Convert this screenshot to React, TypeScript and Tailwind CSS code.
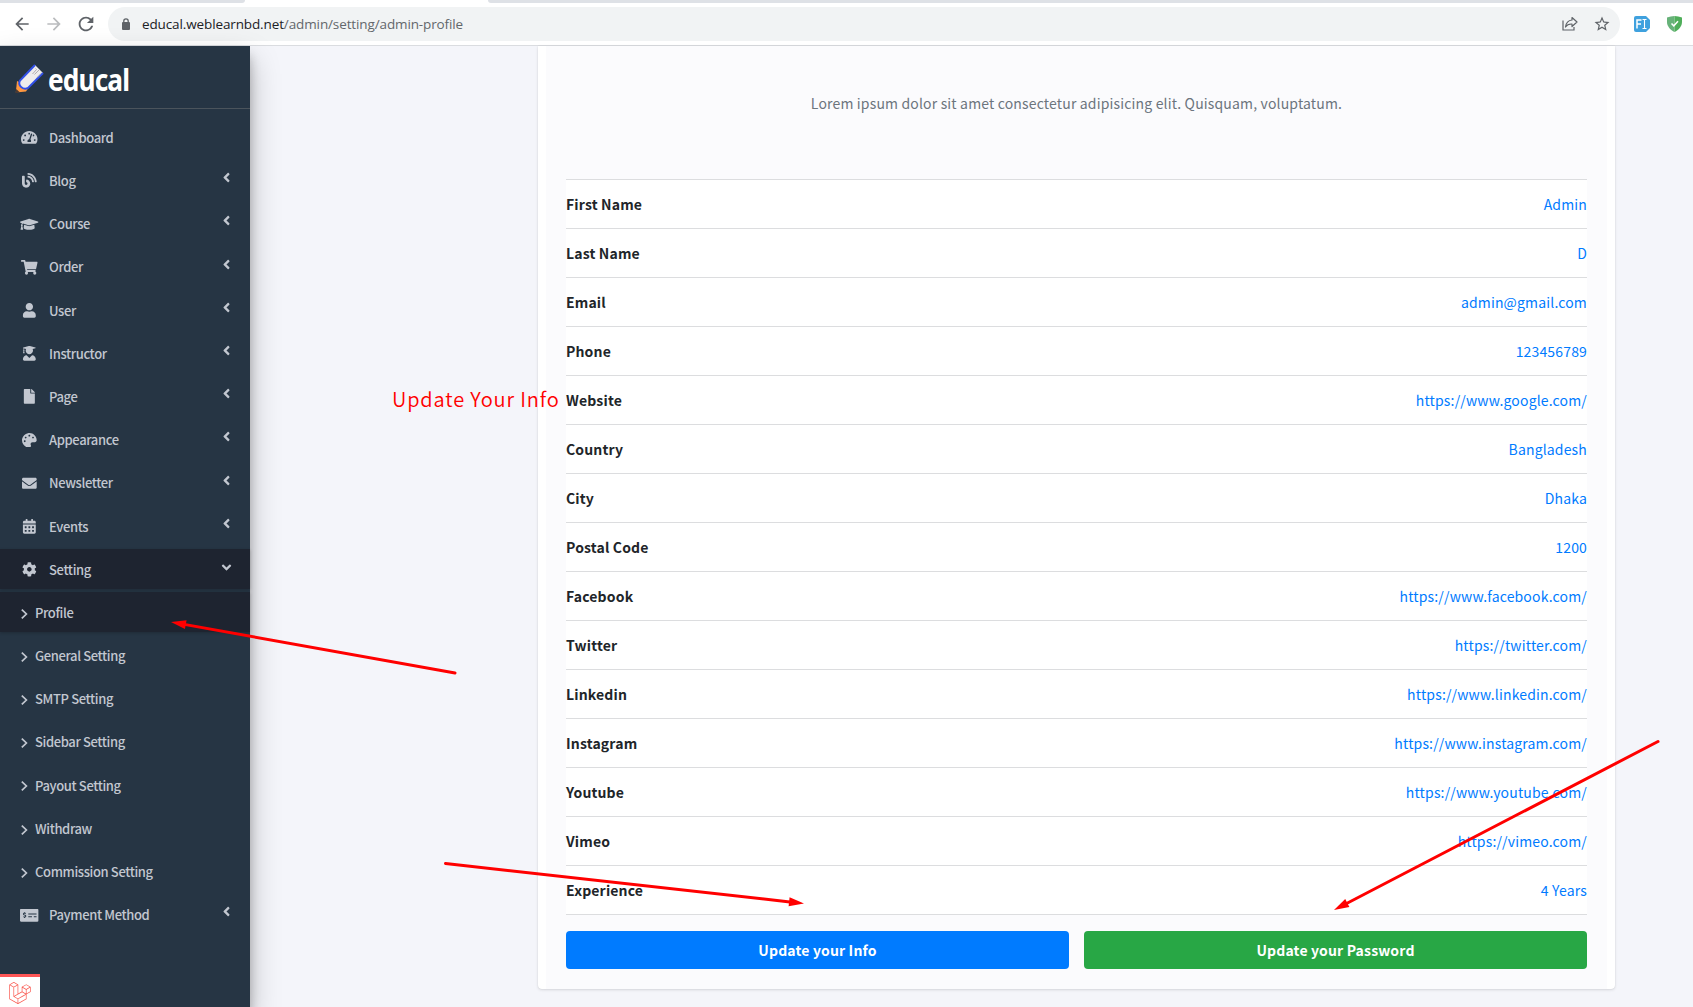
import React from 'react';
import {
  FaTachometerAlt, FaBlog, FaGraduationCap, FaShoppingCart, FaUser, FaUserGraduate, FaFile, FaPalette,
  FaEnvelope, FaCalendarAlt, FaCog, FaMoneyCheckAlt, FaAngleLeft, FaLaravel,
} from 'react-icons/fa';
import { MdArrowBack, MdArrowForward, MdRefresh, MdStarBorder } from 'react-icons/md';

type Item = {
  label: string;
  Icon: React.ComponentType<{ className?: string }>;
  size?: string;
  arrow: boolean;
  open?: boolean;
};

const topItems: Item[] = [
  { label: 'Dashboard', Icon: FaTachometerAlt, size: 'h-[14.7px] w-[16.5px]', arrow: false },
  { label: 'Blog', Icon: FaBlog, arrow: true },
  { label: 'Course', Icon: FaGraduationCap, size: 'h-[14.7px] w-[18.4px]', arrow: true },
  { label: 'Order', Icon: FaShoppingCart, size: 'h-[14.7px] w-[16.5px]', arrow: true },
  { label: 'User', Icon: FaUser, arrow: true },
  { label: 'Instructor', Icon: FaUserGraduate, arrow: true },
  { label: 'Page', Icon: FaFile, arrow: true },
  { label: 'Appearance', Icon: FaPalette, arrow: true },
  { label: 'Newsletter', Icon: FaEnvelope, arrow: true },
  { label: 'Events', Icon: FaCalendarAlt, arrow: true },
  { label: 'Setting', Icon: FaCog, arrow: true, open: true },
];

const subItems = ['Profile', 'General Setting', 'SMTP Setting', 'Sidebar Setting', 'Payout Setting', 'Withdraw', 'Commission Setting'];

const rows: [string, string][] = [
  ['First Name', 'Admin'],
  ['Last Name', 'D'],
  ['Email', 'admin@gmail.com'],
  ['Phone', '123456789'],
  ['Website', 'https://www.google.com/'],
  ['Country', 'Bangladesh'],
  ['City', 'Dhaka'],
  ['Postal Code', '1200'],
  ['Facebook', 'https://www.facebook.com/'],
  ['Twitter', 'https://twitter.com/'],
  ['Linkedin', 'https://www.linkedin.com/'],
  ['Instagram', 'https://www.instagram.com/'],
  ['Youtube', 'https://www.youtube.com/'],
  ['Vimeo', 'https://vimeo.com/'],
  ['Experience', '4 Years'],
];

function NavItem({ label, Icon, size = 'h-[14.7px] w-[14.7px]', arrow, open }: Item) {
  return (
    <li className={`mb-[3.2px] flex h-10 items-center pl-[17px] pr-4 pt-[1.2px] ${open ? 'bg-[#1e2430] shadow-[0_1px_3px_rgba(0,0,0,0.2)]' : ''}`}>
      <span className="flex w-[25px] justify-center">
        <Icon className={size} />
      </span>
      <span className="ml-[7px] flex-1">{label}</span>
      {arrow && <FaAngleLeft className={`text-[15px] ${open ? 'mb-[4px] -rotate-90' : 'mb-[6px]'}`} />}
    </li>
  );
}

function Toolbar() {
  return (
    <header className="h-[46px] shrink-0 border-b border-[#dadce0] bg-white">
      <div className="flex h-[3px] justify-between">
        <div className="w-[245px] rounded-br-[3px] bg-[#dee1e6]" />
        <div className="w-[1205px] rounded-bl-[3px] bg-[#dee1e6]" />
      </div>
      <div className="flex h-[42px] items-center pl-3">
        <MdArrowBack className="h-5 w-5 text-[#5f6368]" />
        <MdArrowForward className="ml-3 h-5 w-5 text-[#babcbe]" />
        <MdRefresh className="ml-[11px] h-[22px] w-[22px] text-[#5f6368]" />
        <div className="ml-[11px] flex h-[34px] w-[1512px] items-center rounded-full bg-[#f1f3f4] pl-[12px] pr-[9px]">
          <svg className="mb-px h-3 w-3" viewBox="0 0 12 12" fill="#5f6368">
            <rect x="2" y="4" width="8" height="8" rx="1" />
            <path d="M3.800 4.500V3a2.200 2.200 0 0 1 4.400 0v1.500" fill="none" stroke="#5f6368" strokeWidth="1.300" />
          </svg>
          <span className="ml-[10px] flex-1 font-['Open_Sans',sans-serif] text-[13.5px] tracking-[-0.12px] text-[#63676b]">
            <span className="text-[#202124]">educal.weblearnbd.net</span>/admin/setting/admin-profile
          </span>
          <svg className="mr-[15px] h-4 w-4" viewBox="0 0 16 16" fill="none" stroke="#5f6368" strokeWidth="1.200">
            <path d="M1 4.500V14h11v-3" />
            <path d="M10 1.500 15 6l-5 4.500V8C7 7.800 5 8.700 3.500 11 4 7.200 6 4.400 10 4Z" strokeLinejoin="round" />
          </svg>
          <MdStarBorder className="h-[18px] w-[18px] text-[#5f6368]" />
        </div>
        <svg className="ml-[14px] h-4 w-4" viewBox="0 0 16 16">
          <path d="M2 0h10l4 4v8l-4 4H2a2 2 0 0 1-2-2V2a2 2 0 0 1 2-2Z" fill="#3fa1de" />
          <path d="M3 12.500V4h4.500M3 8h4" stroke="#fff" strokeWidth="1.500" fill="none" />
          <path d="M8.500 3.500h4M8.500 12.500h4M10.500 3.500v9" stroke="#fff" strokeWidth="1.100" fill="none" />
        </svg>
        <svg className="ml-[17px] h-4 w-[15px]" viewBox="0 0 15 16">
          <path d="M7.500 0C5 .2 2.500.8 0 1.600V6c0 4.500 3.500 8 7.500 10Z" fill="#67b279" />
          <path d="M7.500 0C10 .2 12.500.8 15 1.600V6c0 4.500-3.500 8-7.500 10Z" fill="#4fae5a" />
          <path d="m4.500 7.500 2.300 2.300 4.200-4.600" stroke="#fff" strokeWidth="1.500" fill="none" />
        </svg>
      </div>
    </header>
  );
}

function Sidebar() {
  return (
    <aside className="relative z-10 h-full w-[250px] shrink-0 bg-[#263544] text-[#c2c7d0] shadow-[0_14px_28px_rgba(0,0,0,0.25),0_10px_10px_rgba(0,0,0,0.22)]">
      <div className="flex h-[63px] border-b border-[#4b545c] pl-[15px] pt-[17px]">
        <svg className="h-[31px] w-[31px] shrink-0" viewBox="0 0 31 31">
          <path d="M2 18 .8 29.500 11 28.500 14 24Z" fill="#ff9840" />
          <path d="M1.200 26 .5 30.300 5 29.500Z" fill="#4a3a34" />
          <path d="M20 2 5 17.500C2.500 22 7.500 27.500 13 25L28 10" fill="#efecec" stroke="#3150e8" strokeWidth="2" />
          <path d="m20.500 5.500 1 1-4 4.500M24 7l-4.500 4.500M26 10.500l-4 4" stroke="#aba7ab" strokeWidth=".9" fill="none" />
        </svg>
        <span className="ml-[2px] mt-[-1px] origin-left scale-x-[0.89] font-['Noto_Sans',sans-serif] text-[29.5px] font-bold leading-[36px] tracking-[-1px] text-white">educal</span>
      </div>
      <ul className="pt-2 text-[13px] font-medium tracking-[-0.37px]">
        {topItems.map((item) => <NavItem key={item.label} {...item} />)}
        {subItems.map((label, i) => (
          <li key={label} className={`mb-[3.2px] flex h-10 items-center pl-[17px] pt-[1.2px] ${i === 0 ? 'bg-[#1e2430] shadow-[0_1px_3px_rgba(0,0,0,0.2)]' : ''}`}>
            <svg className="ml-1 mt-[2px] h-[10px] w-[7px]" viewBox="0 0 7 10" fill="none" stroke="currentColor" strokeWidth="1.700">
              <path d="m.8.600 4.600 4.400L.8 9.400" />
            </svg>
            <span className="ml-[7px]">{label}</span>
          </li>
        ))}
        <NavItem label="Payment Method" Icon={FaMoneyCheckAlt} size="h-[14.7px] w-[18.4px]" arrow />
      </ul>
      <div className="absolute bottom-0 left-0 flex h-[33px] w-10 justify-center border-t-[3px] border-[#ff5656] bg-white pt-[5px]">
        <FaLaravel className="h-[22px] w-[22px] text-[#f9584f]" />
      </div>
    </aside>
  );
}

function Arrows() {
  const arrows = [
    { from: [455, 673], to: [171, 622] },
    { from: [445.5, 863.5], to: [804, 903.5] },
    { from: [1658, 741.5], to: [1334, 910] },
  ];
  return (
    <svg className="pointer-events-none absolute inset-0 z-20 h-full w-full" viewBox="0 0 1693 1007">
      {arrows.map(({ from, to }) => {
        const dx = to[0] - from[0];
        const dy = to[1] - from[1];
        const len = Math.hypot(dx, dy);
        const angle = (Math.atan2(dy, dx) * 180) / Math.PI;
        return (
          <g key={from[0]} transform={`translate(${from[0]} ${from[1]}) rotate(${angle})`} fill="#ff0000">
            <path d={`M0 0H${len - 12}`} stroke="#ff0000" strokeWidth="3" strokeLinecap="round" />
            <path d={`M${len} 0l-15-4.500v9Z`} />
          </g>
        );
      })}
    </svg>
  );
}

export default function App() {
  return (
    <div className="relative flex h-[1007px] w-[1693px] flex-col overflow-hidden bg-[#f4f6f9] font-['Noto_Sans_CJK_SC',sans-serif]">
      <Toolbar />
      <div className="flex min-h-0 flex-1">
        <Sidebar />
        <main className="flex-1 bg-[#f4f5fa] pl-[288px]">
          <section className="h-[943px] w-[1077px] rounded-b-[4px] bg-white px-2 shadow-[0_0_1px_rgba(0,0,0,0.125),0_1px_3px_rgba(0,0,0,0.12)]">
            <div className="h-full bg-[#fbfbfd] px-5 text-[14px] tracking-[0.16px]">
              <p className="flex h-[133px] items-start justify-center pt-[45px] leading-6 text-[#6c757d]">
                Lorem ipsum dolor sit amet consectetur adipisicing elit. Quisquam, voluptatum.
              </p>
              <ul className="border-t border-[#dcdddf] bg-white">
                {rows.map(([name, value]) => (
                  <li key={name} className="flex h-[49px] items-center justify-between border-b border-[#dcdddf]">
                    <b className="text-[#212529]">{name}</b>
                    <a className="text-[#007bff]">{value}</a>
                  </li>
                ))}
              </ul>
              <div className="mt-4 flex gap-[15px] font-bold text-white">
                <button className="h-[38px] flex-1 rounded-[4px] bg-[#007bff]">Update your Info</button>
                <button className="h-[38px] flex-1 rounded-[4px] bg-[#28a745]">Update your Password</button>
              </div>
            </div>
          </section>
        </main>
      </div>
      <span className="absolute left-[392px] top-[383px] z-20 whitespace-nowrap text-[20px] font-[350] leading-8 tracking-[0.85px] text-[#ff0000]">Update Your Info</span>
      <Arrows />
    </div>
  );
}
